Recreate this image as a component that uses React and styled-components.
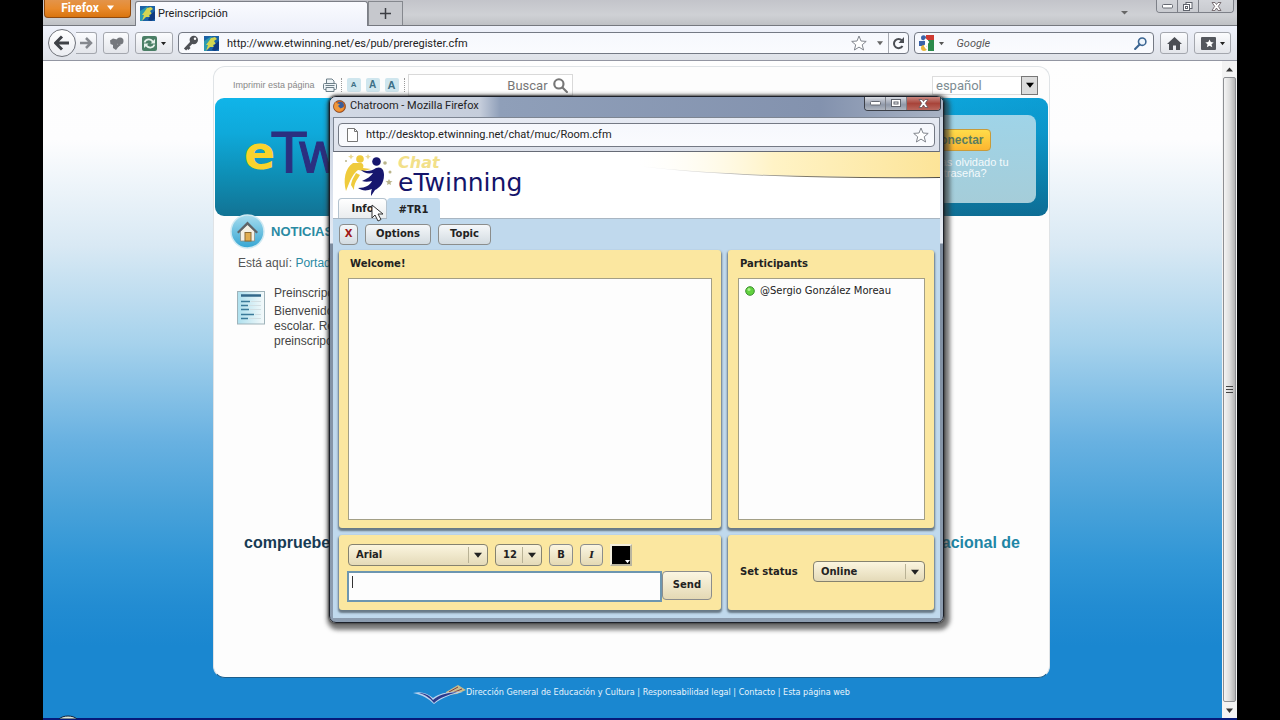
import React from "react";
import styled, { createGlobalStyle, css } from "styled-components";

const ui = `Roboto, "Open Sans", sans-serif`;
const arial = `"Liberation Sans", Arial, sans-serif`;
const verdana = `"DejaVu Sans", Verdana, sans-serif`;

const GlobalStyle = createGlobalStyle`
  *, *::before, *::after { box-sizing: border-box; }
  body { margin: 0; background: #000; }
  button, input, select, textarea { font: inherit; color: inherit; margin: 0; }
  svg { display: block; flex: none; }
`;

/* ---------- browser chrome ---------- */

const Screen = styled.div`
  min-height: 100vh;
  padding: 0 43px;
  display: flex;
  flex-direction: column;
  background: #000;
  font-family: ${ui};
  font-size: 11px;
  color: #222;
`;

const TabStrip = styled.header`
  height: 26px;
  display: flex;
  align-items: flex-start;
  background: linear-gradient(180deg, #c3c4ca, #cfd1d5 60%, #bfc1c5);
  border-bottom: 1px solid #75787f;
`;

const FirefoxButton = styled.button`
  width: 87px;
  height: 18px;
  margin: 0 4px 0 1px;
  padding: 0 0 2px;
  display: flex;
  align-items: center;
  justify-content: center;
  gap: 8px;
  border: 1px solid #8f4a10;
  border-top: 0;
  border-radius: 0 0 4px 4px;
  background: linear-gradient(180deg, #e3944a, #e88a2c 50%, #d9740f);
  color: #fff;
  font-weight: 700;
  font-size: 12px;
  line-height: 14px;
`;

const Tab = styled.div`
  height: 26px;
  flex: 0 1 233px;
  margin-top: 1px;
  padding: 0 4px 2px;
  display: flex;
  align-items: center;
  gap: 3px;
  border: 1px solid #7b7e86;
  border-bottom: 0;
  border-radius: 3px 3px 0 0;
  background: linear-gradient(180deg, #fafbff, #eef1fa);
  color: #222;
`;

const NewTab = styled.button`
  width: 35px;
  height: 24px;
  margin-top: 1px;
  padding: 0;
  display: grid;
  place-items: center;
  border: 1px solid #85888e;
  border-bottom: 0;
  background: #c6c8cd;
`;

const StripEnd = styled.div`
  margin-left: auto;
  margin-right: 3px;
  display: flex;
  align-items: flex-start;
  gap: 28px;
`;

const WindowButtons = styled.div`
  display: flex;
  height: 13px;
  border: 1px solid #7d8088;
  border-top: 0;
  border-radius: 0 0 4px 4px;
  overflow: hidden;
`;

const WindowButton = styled.button`
  width: ${(p) => p.$w || 20}px;
  padding: 0;
  display: grid;
  place-items: center;
  border: 0;
  border-left: ${(p) => (p.$first ? 0 : 1)}px solid #7d8088;
  background: ${(p) =>
    p.$red
      ? "linear-gradient(180deg, #c98780, #a8443a 50%, #b9665c)"
      : p.$dark
        ? "linear-gradient(180deg, #d8dbe2, #8f98a8 60%, #b0b6c0)"
        : "linear-gradient(180deg, #d3d5da, #c9cbd0)"};
`;

const Toolbar = styled.nav`
  height: 35px;
  padding: 0 6px 0 5px;
  display: flex;
  align-items: center;
  background: linear-gradient(180deg, #eff2fb, #e6e9f1 50%, #dfe2e8);
  border-bottom: 1px solid #9396a2;
`;

const ToolButton = styled.button`
  width: ${(p) => p.$w}px;
  height: 22px;
  margin-left: ${(p) => p.$ml || 0}px;
  padding: 0;
  display: flex;
  align-items: center;
  justify-content: center;
  gap: 4px;
  border: 1px solid #a4a7ae;
  border-radius: 3px;
  background: linear-gradient(180deg, #fbfcfe, #e3e5ea);
`;

const BackButton = styled.button`
  width: 28px;
  height: 28px;
  padding: 0;
  display: grid;
  place-items: center;
  border: 1px solid #6f7279;
  border-radius: 50%;
  background: linear-gradient(180deg, #fff, #ebedf2);
`;

const ForwardButton = styled(ToolButton)`
  border-left: 0;
  border-radius: 0 3px 3px 0;
`;

const Field = styled.label`
  height: ${(p) => p.$h || 22}px;
  flex: ${(p) => p.$flex || "1 1 0"};
  min-width: 0;
  margin-left: ${(p) => p.$ml || 0}px;
  padding: 0 ${(p) => p.$pr || 0}px 0 4px;
  display: flex;
  align-items: center;
  gap: ${(p) => p.$gap || 5}px;
  border: 1px solid #747984;
  border-radius: 4px;
  background: linear-gradient(180deg, #f6f8fd, #fafbfe);
`;

const FieldInput = styled.input`
  flex: 1;
  min-width: 0;
  height: 18px;
  padding: 0 0 0 ${(p) => p.$indent || 0}px;
  border: 0;
  outline: 0;
  background: transparent;
  font-family: ${ui};
  font-size: 11px;
  font-style: ${(p) => (p.$italic ? "italic" : "normal")};
  color: ${(p) => (p.$italic ? "#555" : "#222")};
  &::placeholder { color: #555; opacity: 1; }
`;

const BareButton = styled.button`
  padding: 0;
  border: 0;
  background: none;
  display: grid;
  place-items: center;
`;

const Reload = styled(BareButton)`
  width: 20px;
  height: 20px;
  border-left: 1px solid #a7aab2;
`;

/* ---------- page ---------- */

const Viewport = styled.div`
  position: relative;
  flex: 1;
  display: flex;
  border-bottom: 2px solid #061a7a;
`;

const Page = styled.div`
  flex: 1;
  min-width: 0;
  padding: 5px 2px 0 0;
  display: flex;
  flex-direction: column;
  align-items: center;
  font-family: ${arial};
  background: linear-gradient(
    180deg,
    #fefefe 0%, #fdfdfe 12%, #d9e9f4 28%, #a6d2ec 43%, #68b1e1 58%,
    #4ba3da 67%, #3096d6 76%, #228cd2 83%, #1a87d0 89%, #1a87d0 100%
  );
`;

const Card = styled.div`
  position: relative;
  width: 100%;
  max-width: 837px;
  flex: 1;
  display: flex;
  flex-direction: column;
  border: 1px solid #dfe3e6;
  border-bottom-color: #1c5e8c;
  border-radius: 12px;
  background: #fdfdfd;
`;

const Utilities = styled.div`
  height: 31px;
  padding: 5px 11px 0 19px;
  display: flex;
  align-items: center;
`;

const PrintLink = styled.a`
  display: flex;
  align-items: center;
  gap: 8px;
  font-size: 9px;
  color: #888;
  text-decoration: none;
`;

const Sizes = styled.div`
  margin: 0 3px 0 4px;
  padding: 0 5px;
  display: flex;
  gap: 5px;
  border-left: 1px dotted #999;
  border-right: 1px dotted #999;
`;

const SizeButton = styled.button`
  width: 14px;
  height: 14px;
  padding: 0;
  border: 0;
  border-radius: 2px;
  background: #cfe6ee;
  color: #3d6f86;
  font-weight: 700;
  font-size: ${(p) => p.$size}px;
  line-height: 14px;
`;

const SiteSearch = styled.label`
  width: 165px;
  height: 22px;
  padding: 0 4px 0 8px;
  display: flex;
  align-items: center;
  gap: 5px;
  border: 1px solid #d9d9d9;
  background: #fff;
`;

const SiteSearchInput = styled.input`
  flex: 1;
  min-width: 0;
  padding: 0;
  border: 0;
  outline: 0;
  background: transparent;
  text-align: right;
  font-family: Roboto, sans-serif;
  font-size: 13px;
  &::placeholder { color: #777; opacity: 1; }
`;

const Language = styled.label`
  position: relative;
  margin-left: auto;
  width: 106px;
  height: 19px;
  display: flex;
`;

const LanguageSelect = styled.select`
  width: 100%;
  padding: 0 3px;
  appearance: none;
  border: 1px solid #ddd;
  border-radius: 0;
  background: #fff;
  color: #7c8c92;
  font-family: Roboto, sans-serif;
  font-size: 13px;
`;

const LanguageArrow = styled.span`
  position: absolute;
  top: 0;
  right: 0;
  width: 17px;
  height: 19px;
  display: grid;
  place-items: center;
  border: 1px solid #777;
  background: #dcdcdc;
  pointer-events: none;
`;

const Banner = styled.div`
  height: 118px;
  margin: 0 1px;
  padding-left: 29px;
  padding-right: 12px;
  display: flex;
  justify-content: space-between;
  border-radius: 9px;
  background:
    linear-gradient(90deg, rgba(0, 90, 150, 0) 60%, rgba(0, 90, 150, 0.25)),
    linear-gradient(180deg, #10b4e9 0%, #0fa9da 30%, #0e8fb6 65%, #127394 100%);
  overflow: hidden;
`;

const Brand = styled.div`
  padding-top: 22px;
  font-family: ${verdana};
  font-size: 56px;
  line-height: 66px;
  color: #2b2f80;
  -webkit-text-stroke: 1px #2b2f80;
  display: flex;
`;

const BrandE = styled.span`
  width: 28px;
  font-size: 46px;
  font-weight: 700;
  color: #f9d32b;
  -webkit-text-stroke: 0;
`;

const Login = styled.div`
  width: 200px;
  margin: 17px 0 13px;
  padding: 14px 24px 0 88px;
  border-radius: 8px;
  background: linear-gradient(180deg, #9fd4e8, #a5cdd9);
  color: #fff;
  font-size: 11px;
  line-height: 11px;
`;

const Connect = styled.button`
  width: 67px;
  height: 22px;
  margin-bottom: 6px;
  padding: 0;
  display: block;
  border: 1px solid #c89b3a;
  border-radius: 4px;
  background: linear-gradient(180deg, #ffdc4a, #fbb530);
  color: #5a7d60;
  font-weight: 700;
  font-size: 12px;
`;

const ForgotLink = styled.a`
  display: block;
  width: 100px;
  padding-left: 2px;
  color: #f4fafc;
  text-decoration: none;
`;

const SectionHead = styled.div`
  margin: -2px 0 0 16px;
  display: flex;
  align-items: center;
  gap: 6px;
`;

const SectionTitle = styled.h1`
  margin: 0;
  font-size: 13px;
  line-height: 20px;
  font-weight: 700;
  color: #2a8aa3;
`;

const Crumbs = styled.div`
  margin: 6px 0 0 24px;
  font-size: 12px;
  line-height: 16px;
  color: #555;
`;

const CrumbLink = styled.a`
  color: #2a8aa3;
  text-decoration: none;
`;

const News = styled.article`
  margin: 15px 0 0 23px;
  display: flex;
  gap: 9px;
  font-size: 12px;
  line-height: 15px;
  color: #444;
`;

const NewsIcon = styled.div`
  padding-top: 5px;
`;

const NewsTitle = styled.h2`
  margin: 0 0 3px;
  font: inherit;
`;

const NewsText = styled.p`
  margin: 0;
  max-width: 84px;
  white-space: pre-line;
`;

const Notice = styled.div`
  margin: 184px 29px 0 30px;
  display: flex;
  justify-content: space-between;
  font-size: 16px;
  line-height: 20px;
  font-weight: 700;
  color: #173b54;
`;

const NoticeEnd = styled.span`
  color: #1f86a6;
`;

const Footer = styled.footer`
  height: 40px;
  padding-top: 6px;
  display: flex;
  align-items: flex-start;
  font-family: "DejaVu Sans Condensed", ${arial};
  font-size: 9px;
  line-height: 17px;
  color: #e8f4fc;
`;

const FooterLink = styled.a`
  color: inherit;
  text-decoration: none;
`;

const Orb = styled.svg`
  position: absolute;
  left: 15px;
  bottom: -1px;
`;

const Scrollbar = styled.div`
  width: 15px;
  display: flex;
  flex-direction: column;
  align-items: center;
  background: #f3f3f3;
`;

const ScrollEnd = styled.div`
  height: 16px;
  display: grid;
  place-items: center;
`;

const Thumb = styled.div`
  flex: 1;
  width: 13px;
  display: grid;
  place-items: center;
  border: 1px solid #8d8f93;
  border-radius: 2px;
  background: linear-gradient(90deg, #f4f4f4, #dedede 50%, #b4b4b4);
`;

/* ---------- chat window ---------- */

const ChatWindow = styled.section`
  position: absolute;
  top: 29px;
  left: 115px;
  right: 105px;
  padding: 0 3px 4px;
  border: 1px solid #1c2029;
  border-radius: 7px;
  background: linear-gradient(180deg, #c5cedd 0, #e4eaf3 140px, #e4eaf3 146px, #7d8c9f 147px, #8d9db0 100%);
  box-shadow: 0 0 2px 1px rgba(0, 0, 0, 0.45), 2px 3px 4px 4px rgba(50, 50, 50, 0.65);
  font-family: ${verdana};
  font-size: 10px;
  font-weight: 700;
  color: #222;
`;

const ChatTitle = styled.div`
  height: 20px;
  margin: 0 -3px;
  padding: 0 2px 2px 3px;
  display: flex;
  align-items: center;
  gap: 4px;
  border-radius: 6px 6px 0 0;
  background: linear-gradient(90deg, #d3dae6 0, #c5cddb 150px, #8f9fb9 170px, #8392ae 80%, #a9b3c4 100%);
  font-family: ${ui};
  font-size: 11px;
  line-height: 16px;
  font-weight: 400;
`;

const ChatWindowButtons = styled(WindowButtons)`
  margin-left: auto;
  align-self: flex-start;
  height: 14px;
  border-color: #3b3f48;
`;

const ChatAddress = styled.div`
  height: 35px;
  padding: 0 4px;
  display: flex;
  align-items: center;
  border: 1px solid #7d8592;
  border-bottom-color: #666b76;
  background: linear-gradient(180deg, #e6eaf3, #dde1ea);
  font-weight: 400;
`;

const ChatHead = styled.div`
  padding: 2px 0 0 5px;
  background: #fff;
  border-bottom: 1px solid #a9b6c2;
  position: relative;
`;

const Swoosh = styled.svg`
  position: absolute;
  top: 0;
  right: 0;
  width: 50%;
  height: 28px;
`;

const Logo = styled.div`
  height: 44px;
  padding-left: 5px;
  display: flex;
  gap: 5px;
`;

const LogoWords = styled.div`
  font-family: ${verdana};
  font-weight: 400;
  font-size: 25px;
  line-height: 24px;
  color: #14146a;
`;

const LogoChat = styled.div`
  height: 17px;
  font-size: 16px;
  line-height: 17px;
  font-weight: 700;
  font-style: italic;
  color: #f2e089;
`;

const Tabs = styled.div`
  display: flex;
  align-items: flex-end;
`;

const ChatTab = styled.button`
  width: ${(p) => p.$w}px;
  height: 20px;
  padding: 0;
  border: 1px solid #b4c3cf;
  border-bottom: 0;
  border-radius: 4px 4px 0 0;
  font-weight: 700;
  font-size: 10px;
  background: linear-gradient(180deg, #fff, #e9ecee);
  ${(p) =>
    p.$active &&
    css`
      margin-bottom: -1px;
      height: 21px;
      border-color: #c0d9ed;
      background: #c0d9ed;
    `}
`;

const ChatBody = styled.div`
  padding: 5px 6px 8px;
  background: #c0d9ed;
`;

const ChatActions = styled.div`
  display: flex;
  gap: 7px;
`;

const ChatButton = styled.button`
  width: ${(p) => p.$w}px;
  height: ${(p) => p.$h || 21}px;
  padding: 0 0 2px;
  border: 1px solid #8b8d8c;
  border-radius: 4px;
  background: ${(p) =>
    p.$warm
      ? "linear-gradient(180deg, #fbf6e2, #e4d9b4)"
      : "linear-gradient(180deg, #f5f8fa, #d3dbe1)"};
  color: ${(p) => (p.$danger ? "#a01818" : "#222")};
  font-family: ${(p) => (p.$serif ? `"DejaVu Serif", Georgia, serif` : verdana)};
  font-style: ${(p) => (p.$serif ? "italic" : "normal")};
  font-weight: 700;
`;

const Panels = styled.div`
  margin-top: 5px;
  display: grid;
  grid-template-columns: minmax(0, 1fr) 206px;
  gap: 7px;
`;

const Panel = styled.div`
  padding: ${(p) => p.$pad || "6px 9px 8px"};
  display: flex;
  flex-direction: column;
  border-radius: 3px;
  background: #fbe7a0;
  box-shadow: 0 2px 2px 1px rgba(75, 90, 100, 0.75);
`;

const PanelTitle = styled.h3`
  margin: 0 0 6px 2px;
  font: inherit;
  line-height: 16px;
`;

const Well = styled.div`
  flex: 1;
  min-height: 242px;
  padding: 5px 6px;
  border: 1px solid #a39f86;
  background: #fdfdfd;
`;

const Participant = styled.div`
  display: flex;
  align-items: center;
  gap: 5px;
  font-weight: 400;
  line-height: 14px;
  white-space: nowrap;
`;

const FormatRow = styled.div`
  display: flex;
  gap: 7px;
  margin-left: 1px;
`;

const Combo = styled.label`
  position: relative;
  width: ${(p) => p.$w}px;
  height: ${(p) => p.$h || 22}px;
  display: flex;
`;

const ComboSelect = styled.select`
  width: 100%;
  padding: 0 8px 1px 7px;
  appearance: none;
  border: 1px solid #85826f;
  border-radius: 4px;
  background: linear-gradient(180deg, #fbf5df, #e4dab8);
  font-weight: 700;
  font-size: 10px;
`;

const ComboArrow = styled.span`
  position: absolute;
  top: 3px;
  bottom: 3px;
  right: 0;
  width: 20px;
  padding-right: 2px;
  display: grid;
  place-items: center;
  border-left: 1px solid #b9b295;
  pointer-events: none;
`;

const Swatch = styled.button`
  width: 22px;
  height: 22px;
  padding: 0;
  display: flex;
  align-items: flex-end;
  justify-content: flex-end;
  border: 2px solid #f4efdc;
  border-right-color: #b9b59f;
  border-bottom-color: #b9b59f;
  background: #000;
`;

const ComposeRow = styled.div`
  margin-top: 5px;
  display: flex;
`;

const Compose = styled.textarea`
  flex: 1;
  min-width: 0;
  height: 31px;
  resize: none;
  border: 2px solid #6d96b0;
  outline: 0;
  background: linear-gradient(#333, #333) 3px 3px / 1px 12px no-repeat, #fdfdfd;
  font-family: ${arial};
  font-weight: 400;
  font-size: 12px;
`;

const StatusRow = styled.div`
  flex: 1;
  padding-left: 2px;
  display: flex;
  align-items: center;
  justify-content: space-between;
`;

const Pointer = styled.svg`
  position: absolute;
  top: 52px;
  left: 38px;
`;

/* ---------- drawings ---------- */

const Down = ({ s = 7, c = "#222" }) => (
  <svg width={s} height={s} viewBox="0 0 7 7" aria-hidden="true">
    <path d="M0 1.5h7L3.5 6z" fill={c} />
  </svg>
);

const Favicon = () => (
  <svg width="15" height="15" viewBox="0 0 15 15" aria-hidden="true">
    <rect width="15" height="15" fill="#1b62a6" />
    <path d="M0 5L8 0l-2 6-4 9H0z" fill="#2b9bb0" />
    <path d="M7 2l4-1 2 2-3 2 2 3-3 1 1 2-4 0-4 4 2-6-2 0 3-4z" fill="#d3d652" />
    <path d="M11 8l4-3v8l-4 2-3-1z" fill="#113a80" />
  </svg>
);

const Star = () => (
  <svg width="16" height="16" viewBox="0 0 16 16" aria-hidden="true">
    <path d="M8 1l2 5 5.2.4-4 3.4L12.600 15 8 12.100 3.400 15l1.300-5.200-4-3.400L6 6z" fill="#fff" stroke="#82868e" />
  </svg>
);

const Magnifier = ({ c, s = 14, w = 2 }) => (
  <svg width={s} height={s} viewBox="0 0 14 14" aria-hidden="true" fill="none" stroke={c} strokeWidth={w}>
    <circle cx="5.500" cy="5.500" r="4.300" />
    <path d="M8.800 8.800L13 13" strokeLinecap="round" />
  </svg>
);

const MirrorMagnifier = () => (
  <svg width="13" height="13" viewBox="0 0 14 14" aria-hidden="true" fill="none" stroke="#3c6693" strokeWidth="1.700">
    <circle cx="8.800" cy="5" r="4" fill="#eef5fc" />
    <path d="M6 8L1.200 13" strokeLinecap="round" strokeWidth="2.200" />
  </svg>
);

const GlyphMin = () => (
  <svg width="11" height="5" viewBox="0 0 11 5" aria-hidden="true">
    <rect x=".5" y=".5" width="10" height="3.500" rx="1" fill="#fff" stroke="#666a73" />
  </svg>
);

const GlyphMax = ({ double }) => (
  <svg width="10" height="9" viewBox="0 0 10 9" aria-hidden="true" fill="#fff" stroke="#5f636c">
    {double && <rect x="3" y=".5" width="6" height="6" />}
    <rect x=".5" y={double ? 2.5 : 0.5} width={double ? 6 : 9} height={double ? 6 : 7} />
    <rect x={double ? 2.5 : 3} y={double ? 4.5 : 3} width={double ? 2 : 4} height="2" />
  </svg>
);

const GlyphClose = () => (
  <svg width="11" height="9" viewBox="0 0 11 9" aria-hidden="true">
    <path d="M1 .5h3l1.500 2L7 .5h3L7.300 4.300 10 8.500H7L5.500 6 4 8.500H1l2.700-4.200z" fill="#fff" stroke="#62555a" strokeWidth=".8" />
  </svg>
);

const FirefoxLogo = () => (
  <svg width="13" height="13" viewBox="0 0 13 13" aria-hidden="true">
    <circle cx="6.500" cy="6.500" r="6" fill="#d9681c" stroke="#6a3a1d" strokeWidth=".7" />
    <circle cx="7.300" cy="5.300" r="3.500" fill="#3a5d9b" />
    <path d="M2 2l2.500 1.500L7 4 5 6l2.500 2.500L11 7c0 3-2.500 4.500-5 4.500S1 9 1 6.500z" fill="#f0983a" />
  </svg>
);

const Printer = () => (
  <svg width="14" height="14" viewBox="0 0 14 14" aria-hidden="true" fill="#eef4f7" stroke="#6d7f88">
    <path d="M3.500 6V1H9l2 2v3" />
    <rect x=".5" y="5.500" width="13" height="6" rx="1" />
    <path d="M3 9.500h8v4H3z" />
    <path d="M2.500 7.500h9" />
  </svg>
);

const HomeBadge = () => (
  <svg width="35" height="35" viewBox="0 0 35 35" aria-hidden="true">
    <defs>
      <linearGradient id="badge" x1="0" y1="0" x2="0" y2="1">
        <stop offset="0" stopColor="#a6dcee" />
        <stop offset="1" stopColor="#35a6d3" />
      </linearGradient>
    </defs>
    <circle cx="17.500" cy="17.500" r="16.500" fill="url(#badge)" stroke="#cfe9f2" strokeWidth="1.500" />
    <path d="M10.500 17l7-7 7 7v10h-14z" fill="#f4f0e4" stroke="#8b8577" strokeWidth=".7" />
    <path d="M7 18L17.500 7.500 28 18l-1.500 1.500-9-8.500-9 8.500z" fill="#5f6468" />
    <rect x="15" y="18.500" width="6" height="8.500" fill="#e0ad50" stroke="#8a6a34" />
  </svg>
);

const DocIcon = () => (
  <svg width="28" height="34" viewBox="0 0 28 34" aria-hidden="true">
    <defs>
      <linearGradient id="doc" x1="0" y1="0" x2="1" y2="0">
        <stop offset="0" stopColor="#aee0ee" />
        <stop offset="1" stopColor="#f5fafb" />
      </linearGradient>
    </defs>
    <rect x=".5" y=".5" width="27" height="32.500" fill="url(#doc)" stroke="#9fb3ba" />
    <path d="M4 4.500h20" stroke="#33688a" strokeWidth="2.500" />
    <path d="M4 10.500h9M4 14.500h7M4 18.500h8M4 23.500h13M4 27.500h7" stroke="#3a7a99" strokeWidth="1.500" />
    <path d="M14 10.500h10M12 14.500h12M13 18.500h11M18 23.500h6M12 27.500h12" stroke="#d2dfe3" />
  </svg>
);

const People = () => (
  <svg width="50" height="42" viewBox="0 0 50 42" aria-hidden="true">
    <g fill="#efcb3c">
      <circle cx="17" cy="5" r="3.800" />
      <path d="M17 9c3 0 4 2 3 5l8 1-7 2c-3 0-4-1-6-1-4 3-7 8-10 16L3 37C0 26 2 14 10 9z" />
      <path d="M13 19c-2 4-4 6-5 12l3 5c0-7 3-10 6-15z" />
    </g>
    <g fill="#17176e">
      <circle cx="33.500" cy="7.500" r="4.300" />
      <path d="M18 16c6 2 11 1 15-2 5-2 8 1 8 7 0 9-5 13-9 15l-4 6c0-3 0-5 1-7-5 2-10 2-14-1 8 0 12-3 14-7-4 1-7 1-10 0 5-2 9-5 11-8-5 1-9 0-12-3z" />
    </g>
    <g fill="#b9b48a">
      <path d="M8 0l1 2 2 .5-2 1-1 2-1-2-2-1 2-.5zM25 0l1 2 2 .5-2 1-1 2-1-2-2-1 2-.5z" fill="#ead98f" />
      <circle cx="42" cy="9" r="1.800" />
      <circle cx="47" cy="18" r="1.500" />
      <path d="M46 25l1 2 2.500.3-2 1.500.5 2.200-2-1-2 1 .5-2.200-2-1.500 2.500-.3z" />
      <circle cx="3" cy="7" r="1" />
    </g>
  </svg>
);

const FooterBird = () => (
  <svg width="53" height="22" viewBox="0 0 53 22" aria-hidden="true">
    <path d="M33 8L45 1l8 5-9 4-11 1z" fill="#c9bd8d" />
    <path d="M36 8l9-5M39 9l10-4" stroke="#7d3d44" />
    <path d="M0 9c8-2 14 0 20 5 7-5 16-7 30-6-11 2-20 5-29 12C15 14 9 11 0 9z" fill="#b9d2ee" />
    <path d="M6 9c6 0 10 2 14 7 6-5 12-7 24-8-9 3-18 6-23 11C17 14 13 11 6 9z" fill="#2c3a8c" />
  </svg>
);

const Select = ({ label, w, h, value }) => (
  <Combo $w={w} $h={h}>
    <ComboSelect aria-label={label} defaultValue={value}>
      <option>{value}</option>
    </ComboSelect>
    <ComboArrow>
      <Down s={8} />
    </ComboArrow>
  </Combo>
);

const Controls = ({ as: Box = WindowButtons, chat }) => (
  <Box>
    <WindowButton $first $dark={chat} $w={20} aria-label="Minimizar"><GlyphMin /></WindowButton>
    <WindowButton $dark={chat} $w={21} aria-label="Maximizar"><GlyphMax double={!chat} /></WindowButton>
    <WindowButton $red={chat} $w={chat ? 34 : 35} aria-label="Cerrar"><GlyphClose /></WindowButton>
  </Box>
);

const Chat = () => (
  <ChatWindow>
    <ChatTitle>
      <FirefoxLogo />
      <span>Chatroom - Mozilla Firefox</span>
      <Controls as={ChatWindowButtons} chat />
    </ChatTitle>
    <ChatAddress>
      <Field $h={24} $pr={5} $gap={4}>
        <svg width="19" height="18" viewBox="0 0 19 18" aria-hidden="true">
          <path d="M4.500 2.500h7l3 3v10h-10z" fill="#fff" stroke="#777" />
          <path d="M11.500 2.500v3h3" fill="none" stroke="#777" />
        </svg>
        <FieldInput aria-label="Dirección del chat" defaultValue="http://desktop.etwinning.net/chat/muc/Room.cfm" />
        <Star />
      </Field>
    </ChatAddress>
    <ChatHead>
      <Swoosh viewBox="0 0 300 28" preserveAspectRatio="none" aria-hidden="true">
        <defs>
          <linearGradient id="sand" x1="0" y1="0" x2="1" y2="0">
            <stop offset="0" stopColor="#fffdf4" stopOpacity="0" />
            <stop offset=".45" stopColor="#fff3c6" />
            <stop offset="1" stopColor="#fce498" />
          </linearGradient>
          <linearGradient id="edge" x1="0" y1="0" x2="1" y2="0">
            <stop offset="0" stopColor="#777" stopOpacity="0" />
            <stop offset=".6" stopColor="#77705c" />
            <stop offset="1" stopColor="#4e4c44" />
          </linearGradient>
        </defs>
        <path d="M0 0H300V25C200 26 90 24 0 14z" fill="url(#sand)" />
        <path d="M0 14C90 24 200 26 300 25v1C200 27 90 25 0 14z" fill="url(#edge)" />
      </Swoosh>
      <Logo>
        <People />
        <LogoWords>
          <LogoChat>Chat</LogoChat>
          eTwinning
        </LogoWords>
      </Logo>
      <Tabs>
        <ChatTab $w={49}>Info</ChatTab>
        <ChatTab $w={53} $active>#TR1</ChatTab>
      </Tabs>
      <Pointer width="14" height="18" viewBox="0 0 14 18" aria-hidden="true">
        <path d="M1 1v13l3-3 3 6 3-1.500-3-5.500h5z" fill="#fff" stroke="#333" />
      </Pointer>
    </ChatHead>
    <ChatBody>
      <ChatActions>
        <ChatButton $w={19} $danger>X</ChatButton>
        <ChatButton $w={66}>Options</ChatButton>
        <ChatButton $w={53}>Topic</ChatButton>
      </ChatActions>
      <Panels>
        <Panel>
          <PanelTitle>Welcome!</PanelTitle>
          <Well />
        </Panel>
        <Panel $pad="6px 9px 8px 10px">
          <PanelTitle>Participants</PanelTitle>
          <Well>
            <Participant>
              <svg width="10" height="10" viewBox="0 0 10 10" aria-hidden="true">
                <circle cx="5" cy="5" r="4.300" fill="#62d23f" stroke="#3d8f32" />
                <circle cx="4" cy="3.500" r="1.500" fill="#a8f08c" />
              </svg>
              @Sergio González Moreau
            </Participant>
          </Well>
        </Panel>
        <Panel $pad="9px 9px 8px 8px">
          <FormatRow>
            <Select label="Font" w={140} value="Arial" />
            <Select label="Font size" w={47} value="12" />
            <ChatButton $w={24} $h={22} $warm>B</ChatButton>
            <ChatButton $w={23} $h={22} $warm $serif>I</ChatButton>
            <Swatch aria-label="Text colour">
              <Down s={5} c="#fff" />
            </Swatch>
          </FormatRow>
          <ComposeRow>
            <Compose aria-label="Message" />
            <ChatButton $w={50} $h={29} $warm>Send</ChatButton>
          </ComposeRow>
        </Panel>
        <Panel $pad="6px 9px 8px 10px">
          <StatusRow>
            <span>Set status</span>
            <Select label="Set status" w={112} h={21} value="Online" />
          </StatusRow>
        </Panel>
      </Panels>
    </ChatBody>
  </ChatWindow>
);

export default function App() {
  return (
    <Screen>
      <GlobalStyle />
      <TabStrip>
        <FirefoxButton>
          Firefox <Down c="#fff" />
        </FirefoxButton>
        <Tab>
          <Favicon />
          <span>Preinscripción</span>
        </Tab>
        <NewTab aria-label="Nueva pestaña">
          <svg width="11" height="11" viewBox="0 0 11 11" aria-hidden="true">
            <path d="M5.500 0v11M0 5.500h11" stroke="#3c3e44" strokeWidth="1.500" />
          </svg>
        </NewTab>
        <StripEnd>
          <BareButton aria-label="Listar pestañas">
            <svg width="7" height="16" viewBox="0 0 7 16" aria-hidden="true">
              <path d="M0 11h7l-3.500 3.500z" fill="#666" />
            </svg>
          </BareButton>
          <Controls />
        </StripEnd>
      </TabStrip>

      <Toolbar>
        <BackButton aria-label="Atrás">
          <svg width="16" height="16" viewBox="0 0 16 16" aria-hidden="true">
            <path d="M8 1.500L1.500 8 8 14.500M2.500 8H15" fill="none" stroke="#3f4247" strokeWidth="3" />
          </svg>
        </BackButton>
        <ForwardButton $w={21} aria-label="Adelante">
          <svg width="13" height="12" viewBox="0 0 13 12" aria-hidden="true">
            <path d="M6 1l5 5-5 5M0 6h10" fill="none" stroke="#85888e" strokeWidth="2.500" />
          </svg>
        </ForwardButton>
        <ToolButton $w={26} $ml={6} aria-label="Complementos">
          <svg width="15" height="13" viewBox="0 0 15 13" aria-hidden="true" fill="#75787d">
            <path d="M1 3.500L4 1.500l4 1V7l2 2-3 4-3-2V8L1.500 7z" />
            <circle cx="11" cy="4" r="3.500" />
            <path d="M8 5l4 3-3 2z" />
          </svg>
        </ToolButton>
        <ToolButton $w={38} $ml={6} aria-label="Sincronizar">
          <svg width="15" height="15" viewBox="0 0 15 15" aria-hidden="true">
            <rect width="15" height="15" rx="2" fill="#4b7f66" />
            <path d="M2.500 6.500C4 2.500 9 2.500 11 6M12.500 8.500C11 12.500 6 12.500 4 9" fill="none" stroke="#e8f2ec" strokeWidth="1.700" />
            <path d="M13 3v4.500H8.500zM2 12V7.500h4.500z" fill="#e8f2ec" />
          </svg>
          <Down s={5} />
        </ToolButton>
        <Field $ml={5} $flex="739 1 0">
          <svg width="16" height="16" viewBox="0 0 16 16" aria-hidden="true">
            <circle cx="10.800" cy="5" r="4.200" fill="#4f5257" />
            <path d="M9 7l-7 7.500M4 11.500l2.500 2.500" stroke="#4f5257" strokeWidth="3" />
            <circle cx="12" cy="3.800" r="1.200" fill="#fff" />
          </svg>
          <Favicon />
          <FieldInput $indent={3} aria-label="Dirección" defaultValue="http://www.etwinning.net/es/pub/preregister.cfm" />
          <Star />
          <span />
          <Down s={6} c="#666" />
          <Reload aria-label="Recargar">
            <svg width="13" height="13" viewBox="0 0 13 13" aria-hidden="true">
              <path d="M10.500 9A4.600 4.600 0 1 1 10 3.500" fill="none" stroke="#4b4e54" strokeWidth="2" />
              <path d="M12 0v6H6.500z" fill="#4b4e54" />
            </svg>
          </Reload>
        </Field>
        <Field $ml={5} $pr={6} $flex="233 1 0">
          <svg width="15" height="16" viewBox="0 0 15 16" aria-hidden="true">
            <path d="M7 0h8v5H7z" fill="#cf3a32" />
            <path d="M9 5h6v11H9z" fill="#2b8a4b" />
            <path d="M0 6h6v5H0z" fill="#3b63a8" />
            <circle cx="4.500" cy="2.800" r="2.500" fill="#3b63a8" />
            <circle cx="5" cy="13" r="3" fill="#e8b53a" />
            <path d="M6 4l3 3-3 4 2 3" stroke="#fff" strokeWidth="2" fill="none" />
          </svg>
          <Down s={5} c="#555" />
          <FieldInput $italic $indent={8} aria-label="Buscar en Google" placeholder="Google" />
          <MirrorMagnifier />
        </Field>
        <ToolButton $w={28} $ml={6} aria-label="Inicio">
          <svg width="15" height="13" viewBox="0 0 15 13" aria-hidden="true" fill="#4b4e54">
            <path d="M7.500 0L15 7h-2v6H9V8.500H6V13H2V7H0z" />
          </svg>
        </ToolButton>
        <ToolButton $w={37} $ml={6} aria-label="Marcadores">
          <svg width="15" height="13" viewBox="0 0 15 13" aria-hidden="true">
            <rect width="15" height="13" rx="1" fill="#54575d" />
            <path d="M8.500 2.500l1.300 2.600 2.900.3-2.200 1.900.8 2.900-2.800-1.500-2.600 1.500.6-2.900-2.200-1.900 3-.3z" fill="#fff" />
          </svg>
          <Down s={5} />
        </ToolButton>
      </Toolbar>

      <Viewport>
        <Page>
          <Card>
            <Utilities>
              <PrintLink href="#imprimir">
                Imprimir esta página <Printer />
              </PrintLink>
              <Sizes>
                <SizeButton $size={8}>A</SizeButton>
                <SizeButton $size={10}>A</SizeButton>
                <SizeButton $size={11}>A</SizeButton>
              </Sizes>
              <SiteSearch>
                <SiteSearchInput aria-label="Buscar" placeholder="Buscar" />
                <Magnifier c="#777" s={15} />
              </SiteSearch>
              <Language>
                <LanguageSelect aria-label="Idioma" defaultValue="español">
                  <option>español</option>
                </LanguageSelect>
                <LanguageArrow>
                  <Down s={8} c="#000" />
                </LanguageArrow>
              </Language>
            </Utilities>
            <Banner>
              <Brand>
                <BrandE>e</BrandE>Tw
              </Brand>
              <Login>
                <Connect>Conectar</Connect>
                <ForgotLink href="#clave">¿Has olvidado tu contraseña?</ForgotLink>
              </Login>
            </Banner>
            <SectionHead>
              <HomeBadge />
              <SectionTitle>NOTICIAS</SectionTitle>
            </SectionHead>
            <Crumbs>
              Está aquí: <CrumbLink href="#portada">Portada</CrumbLink>
            </Crumbs>
            <News>
              <NewsIcon>
                <DocIcon />
              </NewsIcon>
              <div>
                <NewsTitle>Preinscripción</NewsTitle>
                <NewsText>{"Bienvenido\nescolar. Re\npreinscripción"}</NewsText>
              </div>
            </News>
            <Notice>
              <span>compruebe</span>
              <NoticeEnd>nacional de</NoticeEnd>
            </Notice>
            <Chat />
          </Card>
          <Footer>
            <FooterBird />
            <span>
              <FooterLink href="#dg">Dirección General de Educación y Cultura</FooterLink> |{" "}
              <FooterLink href="#legal">Responsabilidad legal</FooterLink> |{" "}
              <FooterLink href="#contacto">Contacto</FooterLink> |{" "}
              <FooterLink href="#web">Esta página web</FooterLink>
            </span>
          </Footer>
        </Page>
        <Scrollbar>
          <ScrollEnd>
            <svg width="7" height="5" viewBox="0 0 7 5" aria-hidden="true">
              <path d="M0 4.500h7L3.500.5z" fill="#333" />
            </svg>
          </ScrollEnd>
          <Thumb>
            <svg width="7" height="8" viewBox="0 0 7 8" aria-hidden="true">
              <path d="M0 .5h7M0 3.500h7M0 6.500h7" stroke="#444" />
            </svg>
          </Thumb>
          <ScrollEnd>
            <Down c="#333" />
          </ScrollEnd>
        </Scrollbar>
        <Orb width="20" height="4" viewBox="0 0 20 4" aria-hidden="true">
          <path d="M1 4C5 0 15 0 19 4z" fill="#dfe6d8" stroke="#10233c" />
        </Orb>
      </Viewport>
    </Screen>
  );
}
